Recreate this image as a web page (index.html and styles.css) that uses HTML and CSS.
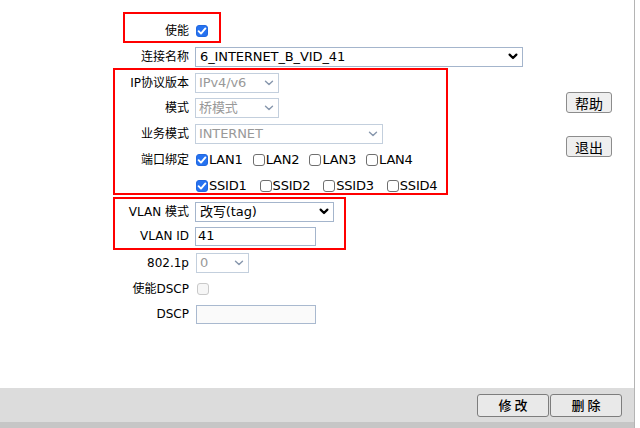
FILE: index.html
```html
<!DOCTYPE html>
<html lang="zh">
<head>
<meta charset="utf-8">
<title>WAN 连接</title>
<link rel="stylesheet" href="styles.css">
</head>
<body>
<div class="frame">
  <div class="content">
    <form class="form">
      <div class="group g1">
        <div class="row r1">
          <span class="lbl">使能</span>
          <span class="ctl"><span class="cb on"><svg viewBox="0 0 12 12" width="12" height="12"><path d="M2.6 6.2 L5 8.6 L9.4 3.4" fill="none" stroke="#fff" stroke-width="1.9" stroke-linecap="round" stroke-linejoin="round"/></svg></span></span>
        </div>
      </div>
      <div class="row r2">
        <span class="lbl">连接名称</span>
        <span class="ctl"><span class="sel conn"><span>6_INTERNET_B_VID_41</span><svg class="chev" viewBox="0 0 10 7" width="10" height="7"><path d="M1.6 1.6 L5 5 L8.4 1.6" fill="none" stroke="#000" stroke-width="2.2" stroke-linecap="round" stroke-linejoin="round"/></svg></span></span>
      </div>
      <div class="group g2">
        <div class="row r3">
          <span class="lbl">IP协议版本</span>
          <span class="ctl"><span class="sel dis w84"><span>IPv4/v6</span><svg class="chev" viewBox="0 0 10 6" width="10" height="6"><path d="M1.5 1.2 L5 4.6 L8.5 1.2" fill="none" stroke="#8797ad" stroke-width="1.4" stroke-linecap="round" stroke-linejoin="round"/></svg></span></span>
        </div>
        <div class="row r4">
          <span class="lbl">模式</span>
          <span class="ctl"><span class="sel dis w84"><span>桥模式</span><svg class="chev" viewBox="0 0 10 6" width="10" height="6"><path d="M1.5 1.2 L5 4.6 L8.5 1.2" fill="none" stroke="#8797ad" stroke-width="1.4" stroke-linecap="round" stroke-linejoin="round"/></svg></span></span>
        </div>
        <div class="row r5">
          <span class="lbl">业务模式</span>
          <span class="ctl"><span class="sel dis w188"><span>INTERNET</span><svg class="chev" viewBox="0 0 10 6" width="10" height="6"><path d="M1.5 1.2 L5 4.6 L8.5 1.2" fill="none" stroke="#8797ad" stroke-width="1.4" stroke-linecap="round" stroke-linejoin="round"/></svg></span></span>
        </div>
        <div class="row r6">
          <span class="lbl">端口绑定</span>
          <span class="ctl cbs">
            <span class="item lan"><span class="cb on"><svg viewBox="0 0 12 12" width="12" height="12"><path d="M2.6 6.2 L5 8.6 L9.4 3.4" fill="none" stroke="#fff" stroke-width="1.9" stroke-linecap="round" stroke-linejoin="round"/></svg></span>LAN1</span>
            <span class="item lan"><span class="cb"></span>LAN2</span>
            <span class="item lan"><span class="cb"></span>LAN3</span>
            <span class="item lan"><span class="cb"></span>LAN4</span>
          </span>
        </div>
        <div class="row r7">
          <span class="lbl"></span>
          <span class="ctl cbs">
            <span class="item ssid"><span class="cb on"><svg viewBox="0 0 12 12" width="12" height="12"><path d="M2.6 6.2 L5 8.6 L9.4 3.4" fill="none" stroke="#fff" stroke-width="1.9" stroke-linecap="round" stroke-linejoin="round"/></svg></span>SSID1</span>
            <span class="item ssid"><span class="cb"></span>SSID2</span>
            <span class="item ssid"><span class="cb"></span>SSID3</span>
            <span class="item ssid"><span class="cb"></span>SSID4</span>
          </span>
        </div>
      </div>
      <div class="group g3">
        <div class="row r8">
          <span class="lbl">VLAN 模式</span>
          <span class="ctl"><span class="sel w139"><span>改写(tag)</span><svg class="chev" viewBox="0 0 10 7" width="10" height="7"><path d="M1.6 1.6 L5 5 L8.4 1.6" fill="none" stroke="#000" stroke-width="2.2" stroke-linecap="round" stroke-linejoin="round"/></svg></span></span>
        </div>
        <div class="row r9">
          <span class="lbl">VLAN ID</span>
          <span class="ctl"><span class="inp w121">41</span></span>
        </div>
      </div>
      <div class="row r10">
        <span class="lbl">802.1p</span>
        <span class="ctl"><span class="sel dis w54"><span>0</span><svg class="chev" viewBox="0 0 10 6" width="10" height="6"><path d="M1.5 1.2 L5 4.6 L8.5 1.2" fill="none" stroke="#8797ad" stroke-width="1.4" stroke-linecap="round" stroke-linejoin="round"/></svg></span></span>
      </div>
      <div class="row r11">
        <span class="lbl">使能DSCP</span>
        <span class="ctl"><span class="cb off"></span></span>
      </div>
      <div class="row r12">
        <span class="lbl">DSCP</span>
        <span class="ctl"><span class="inp dis w120"></span></span>
      </div>
    </form>
    <aside class="side">
      <button type="button" class="btn sbtn">帮助</button>
      <button type="button" class="btn sbtn">退出</button>
    </aside>
  </div>
  <div class="bar">
    <button type="button" class="btn bbtn">修 改</button>
    <button type="button" class="btn bbtn">删 除</button>
  </div>
  <div class="strip"></div>
</div>
</body>
</html>
```
FILE: styles.css
```css
* { box-sizing: border-box; }
html, body { margin: 0; padding: 0; background: #fff; }
body {
  width: 640px;
  height: 428px;
  overflow: hidden;
  font-family: "DejaVu Sans", "Noto Sans CJK SC", sans-serif;
  font-size: 12px;
  line-height: 16px;
  color: #000;
}
.frame { width: 635px; border-right: 1px solid #b4b4b4; }
.content { height: 388px; display: flex; }
.form { width: 540px; flex: 0 0 540px; }
.side {
  display: flex;
  flex-direction: column;
  gap: 23px;
  padding-top: 92px;
  margin-left: 26px;
}

.group { border: 2px solid #ff0000; }
.g1 { margin: 12px 0 0 123px; width: 98px; height: 31px; padding-top: 6px; --lw: 64px; }
.g2 { margin-left: 113px; width: 335px; height: 127px; --lw: 74px; }
.g3 { margin: 2px 0 0 113px; width: 233px; height: 53px; --lw: 74px; }

.row {
  display: grid;
  grid-template-columns: var(--lw, 189px) auto;
  column-gap: 6px;
  align-items: center;
}
.lbl { text-align: right; white-space: nowrap; }
.ctl { display: flex; align-items: center; }

.r1 { height: 21px; }
.r2 { height: 25px; padding-top: 2px; }
.r3 { height: 26px; }
.r4 { height: 24px; }
.r5 { height: 27px; }
.r6 { height: 26px; }
.r7 { height: 20px; padding-top: 5px; }
.r8 { height: 25px; }
.r9 { height: 24px; }
.r10 { height: 26px; }
.r11 { height: 26px; }
.r12 { height: 24px; }
.r10 .ctl, .r11 .ctl, .r12 .ctl { margin-left: 1px; }

.cb {
  display: inline-flex;
  width: 12px;
  height: 12px;
  flex: 0 0 12px;
  border: 1px solid #6f6f6f;
  border-radius: 3px;
  background: #fff;
  margin-left: 1px;
}
.cb.on { background: #2672f0; border-color: #2268e0; }
.cb.on svg { margin: -1px; }
.cb.off { border-color: #c9c9c9; background: #f6f6f6; }

.cbs { display: flex; }
.item { display: flex; align-items: center; white-space: nowrap; font-size: 13px; letter-spacing: -0.2px; }
.item .cb { margin-right: 1px; }
.item.lan { width: 56.7px; }
.item.ssid { width: 63.6px; }

.sel {
  display: flex;
  align-items: center;
  justify-content: space-between;
  height: 20px;
  border: 1px solid #a4b5cc;
  background: #fff;
  padding: 0 4px 0 4px;
  font-size: 13px;
  letter-spacing: -0.1px;
  white-space: nowrap;
}
.sel.conn { width: 328px; }
.sel.dis { color: #999; border-color: #c3cfdd; padding-left: 3px; }
.w84 { width: 84px; }
.w188 { width: 188px; }
.w139 { width: 139px; }
.w54 { width: 53px; }
.w121 { width: 121px; }
.w120 { width: 120px; }
.chev { flex: 0 0 auto; }

.inp {
  display: flex;
  align-items: center;
  height: 19px;
  border: 1px solid #a4b5cc;
  background: #fff;
  padding-left: 2px;
  font-size: 13px;
}
.inp.dis { height: 19px; background: #fafafa; border-color: #a9b9cf; }

.btn {
  font-family: "Noto Sans CJK SC", sans-serif;
  font-size: 13px;
  line-height: 16px;
  color: #000;
  padding: 0;
  border: 1px solid #8c8c8c;
  border-radius: 3px;
  background: #efefef;
}
.sbtn { width: 46px; height: 21px; font-size: 14px; }
.bar {
  height: 34px;
  background: #dcdcdc;
  display: flex;
  justify-content: flex-end;
  align-items: center;
  gap: 1px;
  padding-right: 12px;
}
.bbtn { width: 72px; height: 23px; background: #e9e9e9; border-color: #7d7d7d; font-weight: 500; }
.strip { height: 6px; background: #c6c6c6; }
```
